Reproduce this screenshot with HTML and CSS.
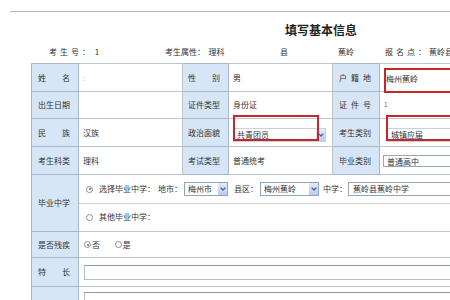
FILE: index.html
```html
<!DOCTYPE html>
<html lang="zh-CN">
<head>
    <meta charset="UTF-8">
    <meta name="viewport" content="width=device-width, initial-scale=1.0">
    <title>填写基本信息</title>
    <link rel="stylesheet" href="styles.css">
</head>
<body>
<div class="page">
    <div class="topline"></div>
    <h1 class="title">填写基本信息</h1>

    <div class="info">
        <span class="info-a"><span class="wide">考生号：</span> 1</span>
        <span class="info-b">考生属性：&nbsp;&nbsp;理科</span>
        <span class="info-c">县</span>
        <span class="info-d">蕉岭</span>
        <span class="info-e"><span class="wide">报名点：</span>蕉岭县</span>
    </div>

    <table class="form">
        <colgroup>
            <col class="c-lbl1"><col class="c-val1"><col class="c-lbl2"><col class="c-val2"><col class="c-lbl3"><col class="c-val3">
        </colgroup>
        <tr class="r1">
            <td class="lbl"><span>姓 名</span></td>
            <td class="faint">:</td>
            <td class="lbl lbl2"><span>性 别</span></td>
            <td>男</td>
            <td class="lbl"><span>户 籍 地</span></td>
            <td class="mark-cell">
                <div class="plain-input">梅州蕉岭</div>
                <div class="redbox rb1"></div>
            </td>
        </tr>
        <tr class="r2">
            <td class="lbl"><span>出生日期</span></td>
            <td></td>
            <td class="lbl lbl2"><span>证件类型</span></td>
            <td>身份证</td>
            <td class="lbl"><span>证 件 号</span></td>
            <td class="tiny">1</td>
        </tr>
        <tr class="r3">
            <td class="lbl"><span>民 族</span></td>
            <td>汉族</td>
            <td class="lbl lbl2"><span>政治面貌</span></td>
            <td class="mark-cell">
                <span class="sel sel-party"><span class="txt">共青团员</span><span class="arr"><svg width="6" height="4" viewBox="0 0 6 4"><path d="M0.6 0.6 L3 3 L5.4 0.6" fill="none" stroke="#4a5f86" stroke-width="1.3"/></svg></span></span>
                <div class="redbox rb2"></div>
            </td>
            <td class="lbl"><span>考生类别</span></td>
            <td class="mark-cell">
                <span class="sel sel-wide sel-low"><span class="txt">城镇应届</span></span>
                <div class="redbox rb3"></div>
            </td>
        </tr>
        <tr class="r4">
            <td class="lbl"><span>考生科类</span></td>
            <td>理科</td>
            <td class="lbl lbl2"><span>考试类型</span></td>
            <td>普通统考</td>
            <td class="lbl"><span>毕业类别</span></td>
            <td><span class="sel sel-wide sel-edge"><span class="txt">普通高中</span></span></td>
        </tr>
        <tr class="r5">
            <td class="lbl"><span>毕业中学</span></td>
            <td colspan="5" class="school">
                <div class="school-line school-first">
                    <span class="radio on"></span>
                    <span class="opt">选择毕业中学：</span>
                    <span class="key">地市：</span>
                    <span class="sel sel-city"><span class="txt">梅州市</span><span class="arr"><svg width="6" height="4" viewBox="0 0 6 4"><path d="M0.6 0.6 L3 3 L5.4 0.6" fill="none" stroke="#4a5f86" stroke-width="1.3"/></svg></span></span>
                    <span class="key key-county">县区：</span>
                    <span class="sel sel-county"><span class="txt">梅州蕉岭</span><span class="arr"><svg width="6" height="4" viewBox="0 0 6 4"><path d="M0.6 0.6 L3 3 L5.4 0.6" fill="none" stroke="#4a5f86" stroke-width="1.3"/></svg></span></span>
                    <span class="key key-school">中学：</span>
                    <span class="text-input">蕉岭县蕉岭中学</span>
                </div>
                <div class="school-line">
                    <span class="radio"></span>
                    <span class="opt">其他毕业中学：</span>
                </div>
            </td>
        </tr>
        <tr class="r6">
            <td class="lbl"><span>是否残疾</span></td>
            <td colspan="5" class="choice">
                <span class="radio on"></span><span class="choice-txt">否</span>
                <span class="radio radio-gap"></span><span class="choice-txt">是</span>
            </td>
        </tr>
        <tr class="r7">
            <td class="lbl"><span>特 长</span></td>
            <td colspan="5" class="long"><div class="long-input"></div></td>
        </tr>
        <tr class="r8">
            <td class="lbl"><span></span></td>
            <td colspan="5" class="long long-top"><div class="long-input"></div></td>
        </tr>
    </table>
</div>
</body>
</html>
```

FILE: styles.css
```css
body {
    margin: 0;
    font-family: "Noto Sans CJK SC", "DejaVu Sans", sans-serif;
    font-size: 8px;
    color: #333;
    background: #fff;
    overflow: hidden;
}
.page {
    width: 520px;
    padding-top: 11px;
}
.topline {
    margin-left: 10px;
    border-top: 1px solid #b4b4b4;
}
.title {
    margin: 10px 0 0 285px;
    font-size: 12px;
    line-height: 16px;
    font-weight: bold;
    color: #222;
}

/* line under the title */
.info {
    display: flex;
    margin-top: 8px;
    padding-left: 49px;
    line-height: 12px;
    white-space: nowrap;
}
.info .wide {
    letter-spacing: 3px;
}
.info-a {
    width: 116px;
}
.info-b {
    width: 115px;
}
.info-c {
    width: 58px;
}
.info-d {
    width: 47px;
}

/* the form table */
.form {
    margin: 5px 0 0 31px;
    border-collapse: collapse;
    table-layout: fixed;
    width: 480px;
}
.c-lbl1 { width: 47px; }
.c-val1 { width: 104px; }
.c-lbl2 { width: 46px; }
.c-val2 { width: 104px; }
.c-lbl3 { width: 47px; }
.c-val3 { width: 132px; }

.form td {
    border: 1px solid #bcc4cc;
    padding: 0 4px;
    vertical-align: middle;
    white-space: nowrap;
    line-height: 12px;
}
.form td.lbl {
    background: #d7e6f6;
    border-color: #a9b9ca;
    padding: 0 7px 0 6px;
}
.form td.lbl2 {
    padding: 0 6px 0 5px;
}
.lbl span {
    display: block;
    width: 32px;
    text-align: justify;
    text-align-last: justify;
}
.r1 td { height: 27px; }
.r2 td { height: 26px; }
.r3 td { height: 27px; }
.r4 td { height: 27px; }
.r5 td { height: 56px; }
.r6 td { height: 25px; }
.r7 td { height: 28px; }
.r8 td { height: 28px; }

.faint {
    color: #bbb;
}
.tiny {
    font-size: 6px;
    color: #666;
}

/* red highlight boxes drawn over the fields */
.mark-cell {
    position: relative;
}
.redbox {
    position: absolute;
    border: 2px solid #c5262c;
    box-sizing: border-box;
}
.rb1 {
    left: 4px;
    top: 4px;
    width: 140px;
    height: 25px;
}
.rb2 {
    left: 4px;
    top: -4px;
    width: 86px;
    height: 26px;
}
.rb3 {
    left: 6px;
    top: -4px;
    width: 140px;
    height: 26px;
}
.plain-input {
    padding: 3px 0 0 2px;
}

/* dropdowns */
.sel {
    display: inline-flex;
    height: 14px;
    border: 1px solid #8fa6c0;
    background: #fff;
    box-sizing: border-box;
    vertical-align: middle;
}
.sel .txt {
    flex: 1;
    padding-left: 3px;
    line-height: 12px;
}
.sel .arr {
    width: 9px;
    background: linear-gradient(#e3ebfb, #b8cbef);
    display: flex;
    align-items: center;
    justify-content: center;
}
.sel-party {
    width: 93px;
    margin-top: 4px;
    border-color: #c9d2dc;
}
.sel-wide {
    width: 130px;
}
.sel-low {
    margin: 4px 0 0 3px;
    border-color: #c9d2dc;
}
.sel-edge {
    height: 12px;
    margin-left: -1px;
    border-color: #9aa6b4;
}
.sel-city {
    width: 44px;
    margin-left: 2px;
}
.sel-county {
    width: 59px;
    margin-left: 2px;
}

/* graduation school block */
.form td.school {
    padding: 0;
}
.school-line {
    display: flex;
    align-items: center;
    height: 27px;
    padding-left: 7px;
}
.school-first {
    border-bottom: 1px solid #d2d2d2;
}
.opt {
    margin-left: 6px;
    width: 59px;
}
.key-county {
    margin-left: 6px;
}
.key-school {
    margin-left: 4px;
}
.text-input {
    margin-left: 1px;
    width: 120px;
    height: 14px;
    box-sizing: border-box;
    border: 1px solid #9aa6b4;
    padding-left: 4px;
    line-height: 12px;
}

.radio {
    display: inline-block;
    position: relative;
    width: 7px;
    height: 7px;
    border: 1px solid #8c8c8c;
    border-radius: 50%;
    box-sizing: border-box;
    background: #fff;
    vertical-align: middle;
}
.radio.on::after {
    content: "";
    position: absolute;
    left: 1.5px;
    top: 1.5px;
    width: 2px;
    height: 2px;
    border-radius: 50%;
    background: #4f7a4f;
}

.form td.choice {
    padding-left: 5px;
}
.choice-txt {
    margin-left: 1px;
    vertical-align: middle;
}
.radio-gap {
    margin-left: 13px;
}

.form td.long {
    padding: 0 0 0 5px;
}
.long-input {
    height: 15px;
    border: 1px solid #b7bcc2;
    border-top-color: #8f959c;
    box-sizing: border-box;
}
.form td.long-top {
    vertical-align: top;
    padding-top: 5px;
}
```
